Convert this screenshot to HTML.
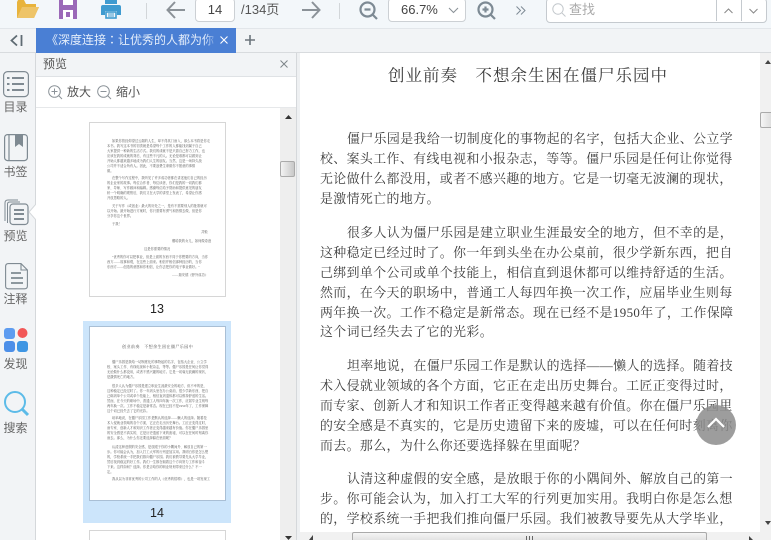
<!DOCTYPE html>
<html style="overflow:hidden;height:540px"><head><meta charset="utf-8"><style>
html,body{margin:0;padding:0}
body{width:771px;height:540px;overflow:hidden;position:relative;background:#fff;font-family:"Liberation Sans","Noto Sans CJK SC",sans-serif;color:#555}
#w{position:absolute;left:0;top:0;width:771px;height:540px;overflow:hidden;contain:strict}
.a{position:absolute}
.t{position:absolute;white-space:nowrap}
.l{position:absolute;white-space:nowrap;font-family:"Liberation Serif","Noto Serif CJK SC",serif;font-size:12.9px;letter-spacing:.42px;line-height:20px;height:20px;color:#3c3c3c}
.m{position:absolute;white-space:nowrap;font-family:"Liberation Serif","Noto Serif CJK SC",serif;font-size:3.27px;line-height:5px;height:5px;color:#555}
.s{position:absolute;left:0;width:31px;text-align:center;font-size:12px;line-height:14px;color:#666}
svg{position:absolute;overflow:hidden}
</style></head><body><div id="w">

<!-- top toolbar -->
<div class="a" style="left:0;top:0;width:771px;height:28px;background:#f3f7fa;border-bottom:1px solid #e2e6ea"></div>
<svg style="left:16px;top:0" width="24" height="20"><path d="M1 2V18H18L23 7H20V4H10L8 0H2Z" fill="#e8b33c"/><path d="M1 18L6 7H23L18 18Z" fill="#eec468"/></svg>
<svg style="left:59px;top:0" width="18" height="20"><path d="M0 0H18V19H0Z" fill="#9b69b8"/><rect x="4" y="0" width="10" height="5" fill="#fff"/><rect x="4" y="10" width="10" height="9" fill="#fff"/><rect x="7" y="12" width="4" height="5" fill="#9b69b8"/></svg>
<svg style="left:101px;top:0" width="20" height="20"><rect x="4" y="0" width="12" height="4" fill="#3f9bd0"/><path d="M2 5H18Q20 5 20 7V15H16V11H4V15H0V7Q0 5 2 5Z" fill="#3f9bd0"/><rect x="5" y="12" width="10" height="6" fill="none" stroke="#3f9bd0" stroke-width="1.6"/><path d="M7 14H13M7 16H13" stroke="#3f9bd0"/></svg>
<div class="a" style="left:146px;top:3px;width:1px;height:16px;background:#d2d6d9"></div>
<svg style="left:166px;top:1px" width="20" height="18" fill="none" stroke="#8b9298" stroke-width="2"><path d="M19 9H2M9 1L1.500 9L9 17"/></svg>
<div class="a" style="left:195px;top:-2px;width:38px;height:22px;background:#fff;border:1px solid #ccd0d4;border-radius:4px;text-align:center;font-size:13px;line-height:22px;color:#444">14</div>
<div class="t" style="left:241px;top:1px;font-size:13px;line-height:18px;color:#555">/134页</div>
<svg style="left:301px;top:1px" width="20" height="18" fill="none" stroke="#8b9298" stroke-width="2"><path d="M1 9H18M11 1L18.500 9L11 17"/></svg>
<div class="a" style="left:339px;top:3px;width:1px;height:16px;background:#d2d6d9"></div>
<svg style="left:359px;top:1px" width="20" height="20" fill="none" stroke="#7d8a94" stroke-width="2.2"><circle cx="8.500" cy="8.500" r="7"/><path d="M13.500 13.500L18 18M5.500 8.500H11.500"/></svg>
<div class="a" style="left:388px;top:-2px;width:76px;height:22px;background:#fff;border:1px solid #ccd0d4;border-radius:4px"></div>
<div class="t" style="left:401px;top:1px;font-size:13px;line-height:18px;color:#444">66.7%</div>
<svg style="left:448px;top:7px" width="11" height="7" fill="none" stroke="#8b9298" stroke-width="1.1"><path d="M1 1L5.500 5.500L10 1"/></svg>
<svg style="left:477px;top:1px" width="20" height="20" fill="none" stroke="#7d8a94" stroke-width="2.2"><circle cx="8.500" cy="8.500" r="7"/><path d="M13.500 13.500L18 18M5.500 8.500H11.500M8.500 5.500V11.500"/></svg>
<svg style="left:516px;top:6px" width="10" height="9" fill="none" stroke="#7d8a94" stroke-width="1"><path d="M.5 .5L4.500 4.500L.5 8.500M5 .5L9 4.500L5 8.500"/></svg>
<div class="a" style="left:546px;top:-2px;width:219px;height:23px;background:#fff;border:1px solid #c5cacf;border-radius:4px"></div>
<svg style="left:552px;top:3px" width="14" height="14" fill="none" stroke="#c3c8cc" stroke-width="1"><circle cx="6" cy="6" r="5.200"/><path d="M10 10L13.500 13.500"/></svg>
<div class="t" style="left:569px;top:1px;font-size:13px;line-height:18px;color:#aaa">查找</div>
<div class="a" style="left:716px;top:0;width:1px;height:21px;background:#c5cacf"></div>
<div class="a" style="left:741px;top:0;width:1px;height:21px;background:#c5cacf"></div>
<svg style="left:724px;top:8px" width="9" height="6" fill="none" stroke="#888" stroke-width="1"><path d="M.5 5L4.500 1L8.500 5"/></svg>
<svg style="left:749px;top:8px" width="9" height="6" fill="none" stroke="#888" stroke-width="1"><path d="M.5 1L4.500 5L8.500 1"/></svg>

<!-- tab bar -->
<div class="a" style="left:0;top:29px;width:771px;height:23px;background:#f2f4f6;border-bottom:1px solid #d8dbde"></div>
<svg style="left:10px;top:34px" width="13" height="13" fill="none" stroke="#5f6b73" stroke-width="1.800"><path d="M7 1.500L1.500 6.500L7 11.500M11.500 1V12"/></svg>
<div class="a" style="left:36px;top:28px;width:200px;height:25px;background:#4a7fd4;overflow:hidden">
<div class="t" style="left:10px;top:4px;font-family:'Liberation Sans','Noto Sans CJK TC',sans-serif;font-size:12px;line-height:17px;color:#e4edfa">《深度连接：让优秀的人都为你</div></div>
<div class="a" style="left:204px;top:28px;width:14px;height:25px;background:linear-gradient(90deg,rgba(74,127,212,0),#4a7fd4)"></div>
<svg style="left:220px;top:36px" width="8" height="8" fill="none" stroke="#fff" stroke-width="1.100"><path d="M.5 .5L7.500 7.500M7.500 .5L.5 7.500"/></svg>
<svg style="left:245px;top:35px" width="10" height="10" fill="none" stroke="#6c757c" stroke-width="1.600"><path d="M5 0V10M0 5H10"/></svg>

<!-- sidebar -->
<div class="a" style="left:0;top:53px;width:35px;height:487px;background:#f2f4f6;border-right:1px solid #d5d8db"></div>
<svg style="left:3px;top:71px" width="26" height="27" fill="none" stroke="#7f8a92" stroke-width="1.200"><rect x=".6" y=".6" width="24.800" height="25" rx="4"/><path d="M9 7H21M9 13H21M9 19H21" stroke-width="2"/><path d="M4 7H6.500M4 13H6.500M4 19H6.500" stroke-width="2"/></svg>
<div class="s" style="top:100px">目录</div>
<svg style="left:4px;top:134px" width="24" height="28" fill="none" stroke="#7f8a92" stroke-width="1.200"><rect x=".6" y=".6" width="22.800" height="26" rx="3"/><path d="M5 1V27"/><path d="M11 1H19V13L15 10L11 13Z" fill="#7f8a92" stroke="none"/></svg>
<div class="s" style="top:165px">书签</div>
<svg style="left:4px;top:199px" width="25" height="27" fill="none" stroke="#7f8a92" stroke-width="1"><path d="M1 22V4Q1 1 4 1H14"/><path d="M3.500 24V5Q3.500 3 6 3H16"/><rect x="6" y="5" width="18" height="20.500" rx="3" stroke-width="1.200"/><path d="M10 11H20M10 15H20M10 20H20" stroke-width="2"/></svg>
<svg style="left:29px;top:204px" width="7" height="16"><path d="M7 0L0 8L7 16" fill="#fff" stroke="#d5d8db"/></svg>
<div class="s" style="top:229px">预览</div>
<svg style="left:5px;top:263px" width="23" height="27" fill="none" stroke="#7f8a92" stroke-width="1.100"><path d="M3.500 .6H16L22.400 7V23Q22.400 25.800 19.500 25.800H3.500Q.6 25.800 .6 23V3.500Q.6 .6 3.500 .6ZM16 .6V7H22.400"/><path d="M6 10H16M6 15H18M6 20H18" stroke-width="1.700"/></svg>
<div class="s" style="top:292px">注释</div>
<svg style="left:4px;top:328px" width="25" height="25"><rect x="0" y="0" width="11" height="11" rx="3" fill="#5e9cf0"/><circle cx="18.500" cy="5" r="5" fill="#f25757"/><rect x="0" y="13" width="11" height="11" rx="3" fill="#4d8fe8"/><rect x="13" y="13" width="11" height="11" rx="3" fill="#3f96e3"/></svg>
<div class="s" style="top:357px">发现</div>
<svg style="left:3px;top:390px" width="27" height="27" fill="none" stroke="#5cbbe8" stroke-width="2"><circle cx="12" cy="12" r="10"/><path d="M19.500 19.500L25 25" stroke-width="3"/></svg>
<div class="s" style="top:421px">搜索</div>

<!-- panel -->
<div class="a" style="left:36px;top:53px;width:260px;height:23px;background:#f2f4f6;border-bottom:1px solid #dfe2e5"></div>
<div class="t" style="left:43px;top:56px;font-size:12px;line-height:17px;color:#555">预览</div>
<svg style="left:280px;top:60px" width="8" height="8" fill="none" stroke="#7d8489" stroke-width="1"><path d="M.5 .5L7.500 7.500M7.500 .5L.5 7.500"/></svg>
<div class="a" style="left:36px;top:107px;width:260px;height:1px;background:#e6e8ea"></div>
<svg style="left:48px;top:85px" width="15" height="15" fill="none" stroke="#8b9298" stroke-width="1"><circle cx="6.500" cy="6.500" r="5.800"/><path d="M10.500 10.500L14 14M3.500 6.500H9.500M6.500 3.500V9.500"/></svg>
<div class="t" style="left:67px;top:84px;font-size:12px;line-height:17px;color:#555">放大</div>
<svg style="left:97px;top:85px" width="15" height="15" fill="none" stroke="#8b9298" stroke-width="1"><circle cx="6.500" cy="6.500" r="5.800"/><path d="M10.500 10.500L14 14M3.500 6.500H9.500"/></svg>
<div class="t" style="left:116px;top:84px;font-size:12px;line-height:17px;color:#555">缩小</div>

<!-- thumb 13 -->
<div class="a" style="left:89px;top:122px;width:135px;height:173px;border:1px solid #d6d6d6;background:#fff"></div>
<div class="m" style="left:112px;top:139px">如果你曾经仰望过云端的人生，却不得其门而入，那么本书将是你走</div>
<div class="m" style="left:107px;top:144px">本书。我写这本书的初衷就是希望每个工作的人都能找到属于自己</div>
<div class="m" style="left:107px;top:149px">大家提供一种新的生活方式。我们的成就不是只靠自己努力工作，也</div>
<div class="m" style="left:107px;top:154px">应该在我的成就的背后，有这些不凡的人。无论是谁都可以做到让</div>
<div class="m" style="left:107px;top:159px">开始人都越来越多地成为我们人生的朋友。当然，这是一场持久战</div>
<div class="m" style="left:107px;top:164px">公司并不适合所有人。因此，不要浪费生命做你不愿意的事情</div>
<div class="m" style="left:107px;top:169px">做。</div>
<div class="m" style="left:112px;top:176px">在整个写作过程中，我听见了许多成功者都在讲述他们自己的经历</div>
<div class="m" style="left:107px;top:181px">的企业家的故事。每位合作者、每位读者，你们是我的一切我们都</div>
<div class="m" style="left:107px;top:186px">家、导师、写作顾问和编辑。感谢每位给予帮助和提供意见的朋友</div>
<div class="m" style="left:107px;top:191px">析一个明确的观察后，我们又在大学的讲堂上发表了，希望让你感</div>
<div class="m" style="left:107px;top:196px">开放思路的人。</div>
<div class="m" style="left:112px;top:204px">关于写作（或创业）最大的好处之一，是有不需要别人的批准就可</div>
<div class="m" style="left:107px;top:209px">以开始。最开始进行方案时，你只需要有勇气和热情去做，但是你</div>
<div class="m" style="left:107px;top:214px">分享你这个世界。</div>
<div class="m" style="left:112px;top:222px">于我！</div>
<div class="m" style="left:201px;top:230px">共勉</div>
<div class="m" style="left:172px;top:239px">赠给我的女儿，如何做奇迹</div>
<div class="m" style="left:144px;top:247px">这是你需要的情况</div>
<div class="m" style="left:112px;top:255px">"优秀的你可以把事业，但是上面的东西不同于你想要的方向，当你</div>
<div class="m" style="left:107px;top:260px">西方——故事和观，在这些上面来。相信并相信那种经历的，当你</div>
<div class="m" style="left:107px;top:265px">东西方——创造的意愿和你相信，让你去把你的电子事业做好。"</div>
<div class="m" style="left:172px;top:273px">——瑞安德《野外成功》</div>
<div class="t" style="left:150px;top:302px;font-size:12.5px;line-height:14px;color:#222">13</div>

<!-- thumb 14 -->
<div class="a" style="left:83px;top:321px;width:148px;height:202px;background:#cce5fb"></div>
<div class="a" style="left:89px;top:326px;width:135px;height:173px;border:1px solid #a9bfd5;background:#fff"></div>
<div class="m" style="left:122px;top:344px;font-size:4.100px;letter-spacing:.35px">创业前奏　不想余生困在僵尸乐园中</div>
<div class="m" style="left:112px;top:360px">僵尸乐园是我给一切制度化的事物起的名字，包括大企业、公立学</div>
<div class="m" style="left:107px;top:365px">校、案头工作、有线电视和小报杂志，等等。僵尸乐园是任何让你觉得</div>
<div class="m" style="left:107px;top:370px">无论做什么都没用，或者不感兴趣的地方。它是一切毫无波澜的现状，</div>
<div class="m" style="left:107px;top:375px">是激情死亡的地方。</div>
<div class="m" style="left:112px;top:384px">很多人认为僵尸乐园是建立职业生涯最安全的地方，但不幸的是，</div>
<div class="m" style="left:107px;top:389px">这种稳定已经过时了。你一年到头坐在办公桌前，很少学新东西，把自</div>
<div class="m" style="left:107px;top:394px">己绑到单个公司或单个技能上，相信直到退休都可以维持舒适的生活。</div>
<div class="m" style="left:107px;top:399px">然而，在今天的职场中，普通工人每四年换一次工作，应届毕业生则每</div>
<div class="m" style="left:107px;top:404px">两年换一次。工作不稳定是新常态。现在已经不是1950年了，工作保障</div>
<div class="m" style="left:107px;top:409px">这个词已经失去了它的光彩。</div>
<div class="m" style="left:112px;top:416px">坦率地说，在僵尸乐园工作是默认的选择——懒人的选择。随着技</div>
<div class="m" style="left:107px;top:421px">术入侵就业领域的各个方面，它正在走出历史舞台。工匠正变得过时，</div>
<div class="m" style="left:107px;top:426px">而专家、创新人才和知识工作者正变得越来越有价值。你在僵尸乐园里</div>
<div class="m" style="left:107px;top:431px">的安全感是不真实的，它是历史遗留下来的废墟，可以在任何时刻离你</div>
<div class="m" style="left:107px;top:436px">而去。那么，为什么你还要选择躲在里面呢？</div>
<div class="m" style="left:112px;top:445px">认清这种虚假的安全感，是放眼于你的小隅间外、解放自己的第一</div>
<div class="m" style="left:107px;top:450px">步。你可能会认为，加入打工大军的行列更加实用。我明白你是怎么想</div>
<div class="m" style="left:107px;top:455px">的，学校系统一手把我们推向僵尸乐园。我们被教导要先从大学毕业，</div>
<div class="m" style="left:107px;top:460px">然后找到稳定的好工作。我们一生都在朝着这个方向努力工作和奋斗</div>
<div class="m" style="left:107px;top:465px">下来。这样如何？选择。你是否给你的职业规划带来过什么？不一</div>
<div class="m" style="left:107px;top:470px">定。</div>
<div class="m" style="left:112px;top:477px">我从以为非常优秀的公司工作的人《优秀的招聘》，也是一项发现工</div>
<div class="t" style="left:150px;top:506px;font-size:12.5px;line-height:14px;color:#222">14</div>

<!-- thumb 15 -->
<div class="a" style="left:89px;top:530px;width:135px;height:10px;border:1px solid #d6d6d6;border-bottom:0;background:#fff"></div>

<!-- panel scrollbar -->
<div class="a" style="left:280px;top:108px;width:16px;height:432px;background:#eeeeee"></div>
<svg style="left:285px;top:115px" width="7" height="4"><path d="M0 4L3.500 0L7 4Z" fill="#333"/></svg>
<div class="a" style="left:280px;top:161px;width:13px;height:14px;border:1px solid #aaa;border-radius:2px;background:linear-gradient(90deg,#f3f3f3,#c8c8c8)"></div>
<svg style="left:285px;top:536px" width="7" height="4"><path d="M0 0H7L3.500 4Z" fill="#333"/></svg>
<div class="a" style="left:296px;top:53px;width:4px;height:487px;background:#eef0f2;border-left:1px solid #d5d8db;box-sizing:border-box"></div>

<!-- main text -->
<div class="t" style="left:388px;top:64px;font-family:'Liberation Serif','Noto Serif CJK SC',serif;font-size:16.5px;line-height:24px;letter-spacing:1px;color:#3c3c3c">创业前奏　不想余生困在僵尸乐园中</div>

<div class="l" style="left:347px;top:129px">僵尸乐园是我给一切制度化的事物起的名字，包括大企业、公立学</div>
<div class="l" style="left:320px;top:149px">校、案头工作、有线电视和小报杂志，等等。僵尸乐园是任何让你觉得</div>
<div class="l" style="left:320px;top:169px">无论做什么都没用，或者不感兴趣的地方。它是一切毫无波澜的现状，</div>
<div class="l" style="left:320px;top:189px">是激情死亡的地方。</div>

<div class="l" style="left:347px;top:223px">很多人认为僵尸乐园是建立职业生涯最安全的地方，但不幸的是，</div>
<div class="l" style="left:320px;top:243px">这种稳定已经过时了。你一年到头坐在办公桌前，很少学新东西，把自</div>
<div class="l" style="left:320px;top:263px">己绑到单个公司或单个技能上，相信直到退休都可以维持舒适的生活。</div>
<div class="l" style="left:320px;top:283px">然而，在今天的职场中，普通工人每四年换一次工作，应届毕业生则每</div>
<div class="l" style="left:320px;top:303px">两年换一次。工作不稳定是新常态。现在已经不是1950年了，工作保障</div>
<div class="l" style="left:320px;top:322px">这个词已经失去了它的光彩。</div>

<div class="l" style="left:347px;top:356px">坦率地说，在僵尸乐园工作是默认的选择——懒人的选择。随着技</div>
<div class="l" style="left:320px;top:376px">术入侵就业领域的各个方面，它正在走出历史舞台。工匠正变得过时，</div>
<div class="l" style="left:320px;top:396px">而专家、创新人才和知识工作者正变得越来越有价值。你在僵尸乐园里</div>
<div class="l" style="left:320px;top:416px">的安全感是不真实的，它是历史遗留下来的废墟，可以在任何时刻离你</div>
<div class="l" style="left:320px;top:436px">而去。那么，为什么你还要选择躲在里面呢？</div>

<div class="l" style="left:347px;top:469px">认清这种虚假的安全感，是放眼于你的小隅间外、解放自己的第一</div>
<div class="l" style="left:320px;top:489px">步。你可能会认为，加入打工大军的行列更加实用。我明白你是怎么想</div>
<div class="l" style="left:320px;top:509px">的，学校系统一手把我们推向僵尸乐园。我们被教导要先从大学毕业，</div>

<!-- scroll-to-top button -->
<div class="a" style="left:696px;top:405px;width:40px;height:40px;border-radius:50%;background:rgba(140,140,140,.85)"></div>
<svg style="left:706px;top:417px" width="20" height="12" fill="none" stroke="#fff" stroke-width="2.200"><path d="M2 10L10 2L18 10"/></svg>

<!-- main scrollbars -->
<div class="a" style="left:760px;top:53px;width:11px;height:487px;background:#f1f1f1"></div>
<svg style="left:765px;top:60px" width="6" height="4"><path d="M0 4L3 0L6 4Z" fill="#444"/></svg>
<div class="a" style="left:760px;top:112px;width:11px;height:14px;border:1px solid #aaa;border-right:0;border-radius:2px 0 0 2px;background:linear-gradient(90deg,#f5f5f5,#dcdcdc)"></div>
<svg style="left:765px;top:521px" width="6" height="4"><path d="M0 0H6L3 4Z" fill="#444"/></svg>
<div class="a" style="left:300px;top:532px;width:460px;height:8px;background:#f1f1f1"></div>
<div class="a" style="left:352px;top:532px;width:353px;height:8px;border:1px solid #aaa;border-bottom:0;border-radius:2px 2px 0 0;background:linear-gradient(#f5f5f5,#e0e0e0)"></div>
<svg style="left:526px;top:536px" width="7" height="4" stroke="#666"><path d="M.5 0V4M3.500 0V4M6.500 0V4"/></svg>
<svg style="left:309px;top:535px" width="4" height="5"><path d="M4 0L0 5H4Z" fill="#444"/></svg>
<svg style="left:749px;top:536px" width="4" height="4"><path d="M0 0L4 4H0Z" fill="#444"/></svg>

</div></body></html>
